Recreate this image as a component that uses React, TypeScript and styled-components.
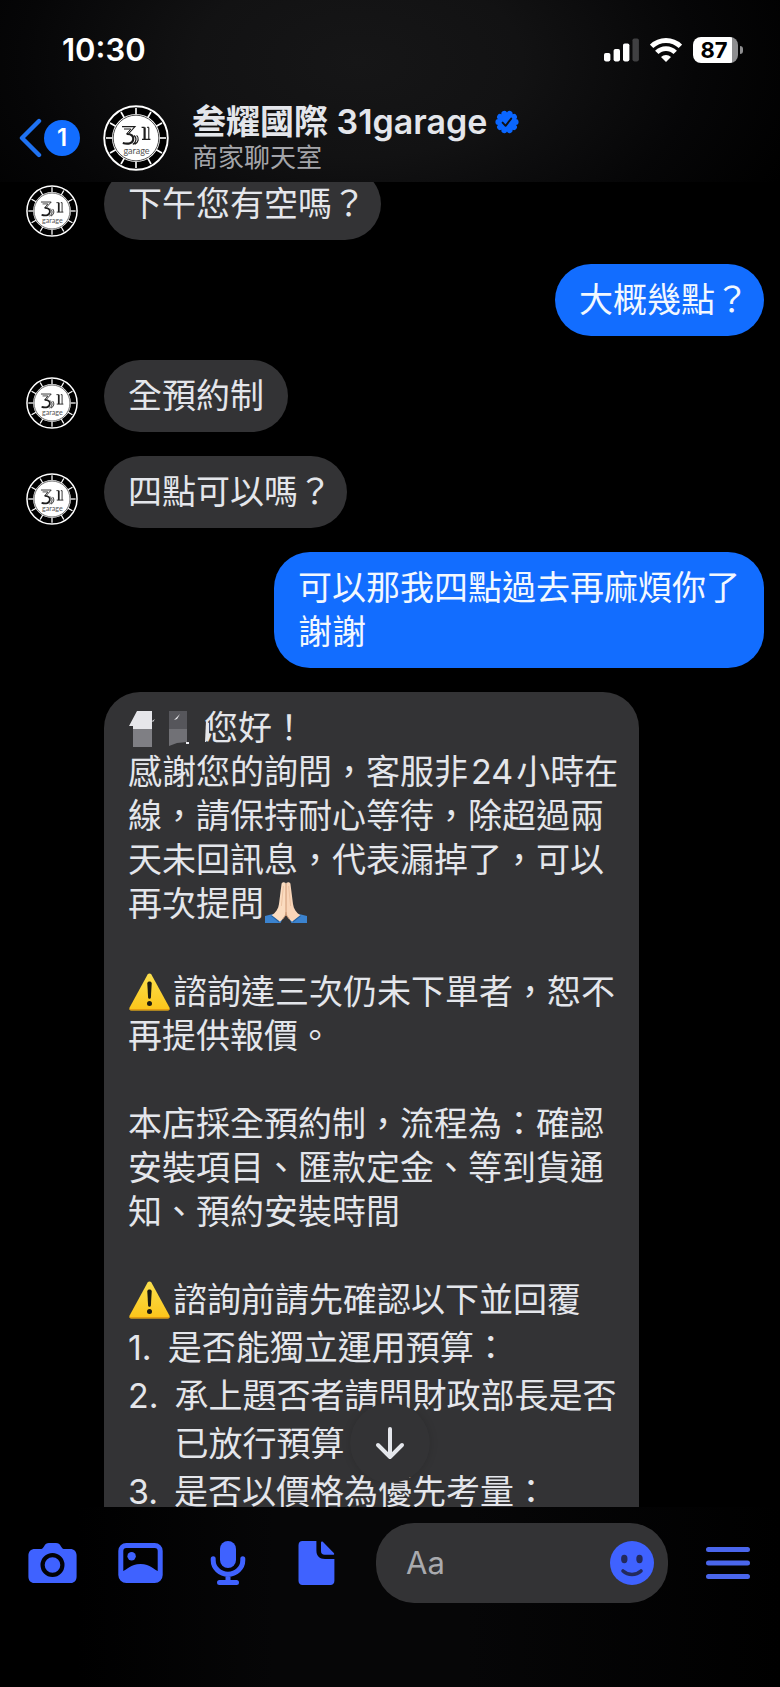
import React from 'react';
import styled, { createGlobalStyle, css } from 'styled-components';

const GlobalStyle = createGlobalStyle`
  *, *::before, *::after { box-sizing: border-box; }
  body {
    margin: 0;
    background: #000;
    color: #e4e6eb;
    font-family: Inter, "Noto Sans CJK TC", sans-serif;
    -webkit-font-smoothing: antialiased;
  }
  button, input { font: inherit; color: inherit; }
`;

const ACCENT = '#3f62ff';
const BLUE = '#126dff';
const BUBBLE = '#333335';

const Screen = styled.div`
  display: flex;
  flex-direction: column;
  height: 100vh;
  overflow: hidden;
`;

const Header = styled.header`
  flex: none;
  background: radial-gradient(ellipse 60% 150% at 46% 34%, #161617 0%, #121213 35%, #060607 72%, #000 100%);
`;

const StatusBar = styled.div`
  display: flex;
  align-items: center;
  justify-content: space-between;
  height: 94px;
  padding: 6px 37px 0 62px;
`;

const Clock = styled.time`
  font-size: 31px;
  line-height: 36px;
  font-weight: 600;
  color: #fff;
`;

const StatusIcons = styled.div`
  display: flex;
  align-items: center;
  gap: 11px;
`;

const Battery = styled.div`
  display: flex;
  align-items: center;
  gap: 2px;
`;

const BatteryBody = styled.div`
  width: 45px;
  height: 26px;
  border-radius: 8px;
  padding-right: 3px;
  background: linear-gradient(90deg, #fff 87%, #8e8e90 87%);
  color: #000;
  font-size: 22px;
  line-height: 26px;
  font-weight: 700;
  text-align: center;
`;

const BatteryTip = styled.div`
  width: 3px;
  height: 8px;
  border-radius: 0 4px 4px 0;
  background: #8e8e90;
`;

const NavRow = styled.div`
  display: flex;
  align-items: center;
  height: 88px;
  padding: 0 18px;
`;

const BackButton = styled.button`
  display: flex;
  align-items: center;
  gap: 2px;
  width: 85px;
  padding: 0;
  border: 0;
  background: none;
`;

const UnreadCount = styled.span`
  width: 36px;
  height: 36px;
  border-radius: 50%;
  background: ${BLUE};
  color: #fff;
  font-size: 24px;
  line-height: 36px;
  font-weight: 600;
  text-align: center;
`;

const Titles = styled.div`
  display: flex;
  flex-direction: column;
  margin-left: 23px;
`;

const Name = styled.h1`
  display: flex;
  align-items: center;
  gap: 8px;
  margin: 0;
  font-size: 34px;
  line-height: 40px;
  font-weight: 600;
  white-space: nowrap;
`;

const Subtitle = styled.p`
  margin: 0;
  font-size: 26px;
  line-height: 32px;
  color: #a4a5aa;
`;

const ThreadArea = styled.main`
  position: relative;
  flex: 1;
  min-height: 0;
  overflow: hidden;
`;

const Thread = styled.div`
  display: flex;
  flex-direction: column;
  gap: 24px;
  margin-top: -14px;
  padding: 0 16px 0 26px;
`;

const Row = styled.div<{ $mine?: boolean }>`
  display: flex;
  flex: none;
  align-items: flex-end;
  justify-content: ${p => (p.$mine ? 'flex-end' : 'flex-start')};
  gap: 26px;
`;

const AvatarSlot = styled.div`
  flex: none;
  width: 52px;
  padding-bottom: 3px;
  line-height: 0;
`;

const Bubble = styled.div<{ $mine?: boolean; $endsInMark?: boolean; $long?: boolean }>`
  padding: 14px ${p => (p.$endsInMark ? 15 : 24)}px 14px 24px;
  border-radius: 36px;
  background: ${p => (p.$mine ? BLUE : BUBBLE)};
  color: ${p => (p.$mine ? '#f2f8ff' : '#e4e6eb')};
  font-size: 34px;
  line-height: 44px;
  white-space: pre;
  ${p => p.$long && css`
    flex: 0 1 535px;
    min-width: 0;
    padding-bottom: 58px;
  `}
`;

const Paragraph = styled.p`
  margin: 0 0 44px;
  &:last-of-type { margin-bottom: 0; }
`;

const Emoji = styled.svg`
  vertical-align: -7px;
  margin-right: 2px;
`;

const Mosaic = styled.svg`
  vertical-align: -7px;
  overflow: visible;
`;

const Questions = styled.ol`
  margin: 2px 0 0;
  padding: 0;
  list-style: none;
  line-height: 48px;
`;

const Question = styled.li`
  display: flex;
  gap: 16px;
`;

const JumpButton = styled.button`
  position: absolute;
  left: 50%;
  bottom: 24px;
  display: flex;
  align-items: center;
  justify-content: center;
  width: 80px;
  height: 80px;
  margin-left: -40px;
  padding: 0;
  border: 0;
  border-radius: 50%;
  background: ${BUBBLE};
  box-shadow: 0 0 8px rgba(0, 0, 0, 0.14);
`;

const Composer = styled.footer`
  flex: none;
  display: flex;
  align-items: center;
  padding: 16px 8px 84px;
  background: linear-gradient(90deg, #000 10%, #060607 35%, #060607 60%, #000 100%);
`;

const ToolButton = styled.button`
  flex: none;
  display: flex;
  align-items: center;
  justify-content: center;
  width: 88px;
  height: 80px;
  padding: 0;
  border: 0;
  background: none;
  color: ${ACCENT};
`;

const Field = styled.div`
  flex: 1;
  display: flex;
  align-items: center;
  min-width: 0;
  height: 80px;
  margin: 0 16px;
  padding: 0 14px 0 30px;
  border-radius: 38px;
  background: ${BUBBLE};
`;

const TextInput = styled.input`
  flex: 1;
  min-width: 0;
  padding: 0;
  border: 0;
  outline: 0;
  background: none;
  font-size: 31px;
  line-height: 40px;
  &::placeholder { color: #a9aaae; opacity: 1; }
`;

const EmojiButton = styled.button`
  flex: none;
  width: 44px;
  height: 44px;
  padding: 0;
  border: 0;
  background: none;
`;

const turns = (n: number) => Array.from({ length: n }, (_, i) => (i * 360) / n);

function Logo({ size }: { size: number }) {
  return (
    <svg width={size} height={size} viewBox="0 0 66 66" role="img" aria-label="31 garage">
      <circle cx="33" cy="33" r="33" fill="#000" />
      <circle cx="33" cy="33" r="31.8" fill="none" stroke="#fff" strokeWidth="1.9" />
      {turns(12).map(a => (
        <path key={a} d="M33 3v6.6" stroke="#fff" strokeWidth="1.6" transform={`rotate(${a} 33 33)`} />
      ))}
      <circle cx="33" cy="33" r="24" fill="#fff" />
      <circle cx="33" cy="33" r="22.8" fill="none" stroke="#222" strokeWidth="0.8" />
      {/* emblem: flat-topped mark with an echoing double arc, then twin posts */}
      <g fill="none" stroke="#1c1c1c">
        <path d="M19 21.6h13l-6.4 7" strokeWidth="1.1" />
        <path d="M21 24h6.8l-4 4.6" strokeWidth="1" />
        <path d="M23.6 29c5.4-.2 7.2 2.6 6.6 5.6-.6 3.4-4.400 5-10.400 3.400" strokeWidth="2.2" />
        <path d="M31 30.4c3 2 2.600 7-1.200 9M33.600 30.400c2.800 2.400 2 7.400-2 9" strokeWidth="1.2" />
        <path d="M41.6 22.4v12" strokeWidth="2.2" />
        <path d="M45.8 22.400v12M38.600 22.400h3M39 34.400h8.400M44.200 22.400h1.600" strokeWidth="1.1" />
      </g>
      <text x="33.5" y="48.5" fontFamily="Lato, sans-serif" fontSize="9" fill="#555" textAnchor="middle">garage</text>
    </svg>
  );
}

function Signal() {
  return (
    <svg width="35" height="24" viewBox="0 0 35 24" aria-hidden="true">
      <g fill="#fff">
        <rect x="0" y="15" width="6.4" height="8.4" rx="1.8" />
        <rect x="9.6" y="11" width="6.4" height="12.4" rx="1.8" />
        <rect x="19" y="5.4" width="6.4" height="18" rx="1.8" />
      </g>
      <rect x="28.5" y="0.4" width="6.4" height="23" rx="1.8" fill="#404042" />
    </svg>
  );
}

function Wifi() {
  return (
    <svg width="32" height="24" viewBox="0 0 32 24" aria-hidden="true">
      <g fill="none" stroke="#fff" strokeWidth="4.8">
        <path d="M1.6 8.4a20.5 20.5 0 0 1 28.8 0" />
        <path d="M6.8 14.4a12.9 12.9 0 0 1 18.4 0" />
      </g>
      <path d="M16 24l-5-5a7.2 7.2 0 0 1 10 0z" fill="#fff" />
    </svg>
  );
}

function Verified() {
  return (
    <svg width="24" height="24" viewBox="0 0 24 24" role="img" aria-label="已驗證">
      <g fill="#0a66ff">
        <circle cx="12" cy="12" r="9.6" />
        {turns(10).map(a => (
          <circle key={a} cx="12" cy="3.3" r="2.9" transform={`rotate(${a + 18} 12 12)`} />
        ))}
      </g>
      <path d="M7.6 12.6l3 3.2 5.6-7.2" fill="none" stroke="#101114" strokeWidth="1.9" strokeLinecap="round" strokeLinejoin="round" />
    </svg>
  );
}

function Warning() {
  return (
    <Emoji width="43" height="38" viewBox="0 0 43 38" role="img" aria-label="警告">
      <defs>
        <linearGradient id="warn" x1="0" y1="0" x2="0" y2="1">
          <stop offset="0" stopColor="#fbe04e" />
          <stop offset="1" stopColor="#fcc419" />
        </linearGradient>
      </defs>
      <path d="M19.6 1.6c.9-1.6 2.9-1.6 3.8 0l18 33c.8 1.6 0 3-1.8 3H3.4c-1.8 0-2.6-1.4-1.8-3z" fill="url(#warn)" />
      <path d="M2.2 36.6h38.6" stroke="#e39b12" strokeWidth="1.4" strokeLinecap="round" />
      <path d="M19.3 10.4c0-2.4 4.4-2.4 4.4 0l-.8 14c-.2 1.8-2.6 1.8-2.8 0z" fill="#1b1a12" />
      <circle cx="21.5" cy="30.4" r="2.5" fill="#1b1a12" />
    </Emoji>
  );
}

function Prayer() {
  return (
    <Emoji width="44" height="41" viewBox="-1 0 44 41" role="img" aria-label="合十">
      <path d="M0 34l8-2 9 6-1.5 3H0zM42 34l-8-2-9 6 1.5 3H42z" fill="#3b83cf" />
      <path d="M16.6 1.6C17.8-.4 21 0 21 2.4V31c0 4-3.4 6-6.600 9L6.400 33.600c4.400-3.200 7-6.600 7.600-11.600z" fill="#fbdcc0" />
      <path d="M25.4 1.6C24.200-.4 21 0 21 2.400V31c0 4 3.400 6 6.600 9l8-6.400c-4.400-3.200-7-6.600-7.600-11.600z" fill="#f9d5b8" />
      <path d="M21 2v28c0 3-1.4 5-3.4 6.6M21 30c0 3 1.4 5 3.4 6.6" fill="none" stroke="#cf9a76" strokeWidth="1" />
      <path d="M18.4 4l-2 20M23.6 4l2 20" fill="none" stroke="#e8bd9b" strokeWidth="0.8" />
      <path d="M6.4 33.6l8 6.4M35.6 33.6l-8 6.4" stroke="#24609f" strokeWidth="1.2" />
    </Emoji>
  );
}

function HiddenName() {
  return (
    <Mosaic width="76" height="36" viewBox="0 0 76 36" role="img" aria-label="姓名已隱藏">
      <path d="M9 0h15v18H5v-3H1z" fill="#e6e6ea" />
      <path d="M24 10l3-2-2 3z" fill="#e6e6ea" />
      <rect x="5" y="18" width="19" height="18" fill="#7f7f84" />
      <rect x="41" y="0" width="18" height="18" fill="#56565b" />
      <path d="M41 18h18v13l-10 1-8 3z" fill="#717176" />
      <path d="M46 9l6-6-3 5zM58 31h3v2h-3z" fill="#f0f0f4" />
      <path d="M78 10l3 2v14l-3 5h-1z" fill="#e6e6ea" />
    </Mosaic>
  );
}

function Incoming({ children, endsInMark }: { children: React.ReactNode; endsInMark?: boolean }) {
  return (
    <Row>
      <AvatarSlot><Logo size={52} /></AvatarSlot>
      <Bubble $endsInMark={endsInMark}>{children}</Bubble>
    </Row>
  );
}

const questions = [
  '是否能獨立運用預算：',
  '承上題否者請問財政部長是否\n已放行預算',
  '是否以價格為優先考量：',
];

export default function App() {
  return (
    <>
      <GlobalStyle />
      <Screen lang="zh-Hant">
        <Header>
          <StatusBar>
            <Clock>10:30</Clock>
            <StatusIcons>
              <Signal />
              <Wifi />
              <Battery>
                <BatteryBody>87</BatteryBody>
                <BatteryTip />
              </Battery>
            </StatusIcons>
          </StatusBar>
          <NavRow>
            <BackButton aria-label="返回，1 則未讀">
              <svg width="24" height="40" viewBox="0 0 24 40" aria-hidden="true">
                <path d="M21 3L4 20l17 17" fill="none" stroke="#1f72f2" strokeWidth="4.4" strokeLinecap="round" strokeLinejoin="round" />
              </svg>
              <UnreadCount>1</UnreadCount>
            </BackButton>
            <Logo size={66} />
            <Titles>
              <Name>叁耀國際 31garage <Verified /></Name>
              <Subtitle>商家聊天室</Subtitle>
            </Titles>
          </NavRow>
        </Header>

        <ThreadArea>
          <Thread>
            <Incoming endsInMark>下午您有空嗎？</Incoming>
            <Row $mine><Bubble $mine $endsInMark>大概幾點？</Bubble></Row>
            <Incoming>全預約制</Incoming>
            <Incoming endsInMark>四點可以嗎？</Incoming>
            <Row $mine><Bubble $mine>{'可以那我四點過去再麻煩你了\n謝謝'}</Bubble></Row>
            <Row>
              <AvatarSlot />
              <Bubble $long>
                <Paragraph>
                  <HiddenName />{'您好！\n感謝您的詢問，客服非\u200a24\u200a小時在\n線，請保持耐心等待，除超過兩\n天未回訊息，代表漏掉了，可以\n再次提問'}<Prayer />
                </Paragraph>
                <Paragraph><Warning />{'諮詢達三次仍未下單者，恕不\n再提供報價。'}</Paragraph>
                <Paragraph>{'本店採全預約制，流程為：確認\n安裝項目、匯款定金、等到貨通\n知、預約安裝時間'}</Paragraph>
                <Paragraph><Warning />諮詢前請先確認以下並回覆</Paragraph>
                <Questions>
                  {questions.map((q, i) => (
                    <Question key={q}><span>{i + 1}.</span><span>{q}</span></Question>
                  ))}
                </Questions>
              </Bubble>
            </Row>
          </Thread>
          <JumpButton aria-label="捲動到最新訊息">
            <svg width="32" height="36" viewBox="0 0 32 36" aria-hidden="true">
              <path d="M16 4v28M4 20l12 12 12-12" fill="none" stroke="#e4e6eb" strokeWidth="4" strokeLinecap="round" strokeLinejoin="round" />
            </svg>
          </JumpButton>
        </ThreadArea>

        <Composer>
          <ToolButton aria-label="相機">
            <svg width="49" height="44" viewBox="0 0 49 44" aria-hidden="true">
              <path d="M7 8h5c2.2 0 3-1 4-2.6C17.4 3 18.6 2 21 2h7c2.4 0 3.6 1 5 3.4C34 7 34.8 8 37 8h5c4.2 0 6.6 2.6 6.6 6.6v20.8c0 4.2-2.4 6.6-6.6 6.6H7c-4.200 0-6.600-2.400-6.600-6.600V14.600C.4 10.600 2.800 8 7 8z" fill="currentColor" />
              <circle cx="24.5" cy="24" r="9.9" fill="none" stroke="#020206" strokeWidth="4.2" />
            </svg>
          </ToolButton>
          <ToolButton aria-label="相簿">
            <svg width="45" height="44" viewBox="0 0 45 44" aria-hidden="true">
              <rect x="2.8" y="4.5" width="39.4" height="35" rx="5.5" fill="none" stroke="currentColor" strokeWidth="5" />
              <path d="M4 30.6c5-1.6 8.4-7.6 18.5-7.6S36 29 41 30.6V38H4z" fill="currentColor" />
              <circle cx="13.6" cy="15.2" r="4.2" fill="currentColor" />
            </svg>
          </ToolButton>
          <ToolButton aria-label="語音訊息">
            <svg width="36" height="44" viewBox="0 0 36 44" aria-hidden="true">
              <rect x="10" y="0" width="16" height="27" rx="8" fill="currentColor" />
              <path d="M3.2 17.8v1.4a14.8 14 0 0 0 29.6 0v-1.4M18 33.5V41M9.5 41.5h17" fill="none" stroke="currentColor" strokeWidth="5" strokeLinecap="round" />
            </svg>
          </ToolButton>
          <ToolButton aria-label="檔案">
            <svg width="37" height="44" viewBox="0 0 37 44" aria-hidden="true">
              <path d="M4.5 0H18.4v9.5C18.4 15 21.5 18 27 18h9.4v21.8c0 2.6-1.4 4.2-4 4.2H4.5C2 44 .5 42.4.5 39.8V4.2C.5 1.6 2 0 4.5 0z" fill="currentColor" />
              <path d="M23 1.4c0-1 1-1.2 1.8-.6l11 11.2c.8.9.4 1.8-.6 1.8h-8.4c-2.6 0-3.8-1.2-3.8-3.8z" fill="currentColor" />
            </svg>
          </ToolButton>
          <Field>
            <TextInput type="text" placeholder="Aa" aria-label="訊息" />
            <EmojiButton aria-label="表情符號">
              <svg width="44" height="44" viewBox="0 0 44 44" aria-hidden="true">
                <circle cx="22" cy="22" r="22" fill={ACCENT} />
                <ellipse cx="14.3" cy="18" rx="3.2" ry="4.2" fill="#232a5c" />
                <ellipse cx="29.5" cy="18" rx="3.2" ry="4.2" fill="#232a5c" />
                <path d="M13 30c5 4.6 13 4.6 18 0" fill="none" stroke="#232a5c" strokeWidth="3.6" strokeLinecap="round" />
              </svg>
            </EmojiButton>
          </Field>
          <ToolButton aria-label="更多選項">
            <svg width="44" height="44" viewBox="0 0 44 44" aria-hidden="true">
              <path d="M2.5 8.5h39M2.5 22h39M2.5 35.5h39" stroke="#4a66ec" strokeWidth="5" strokeLinecap="round" />
            </svg>
          </ToolButton>
        </Composer>
      </Screen>
    </>
  );
}
